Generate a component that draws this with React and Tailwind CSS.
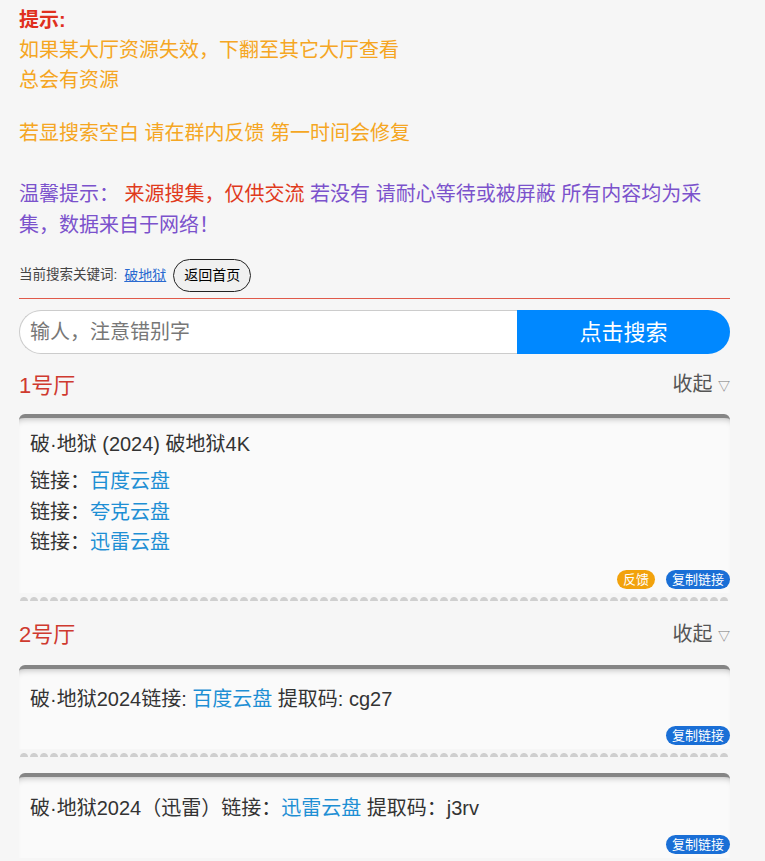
const font = { fontFamily: '"Liberation Sans", "Noto Sans CJK SC", sans-serif' };

function Badge({ color, children }) {
  return (
    <span className={`inline-flex h-[19px] items-center rounded-full px-[6px] text-[13px] leading-none text-white ${color}`}>
      {children}
    </span>
  );
}

function Card({ children, top, badges }) {
  return (
    <div>
      <div className={`rounded-t-[6px] border-t-4 border-[#858585] bg-[#fafafa] pl-[11px] shadow-[inset_0_6px_6px_-5px_rgba(0,0,0,0.25)] ${top}`}>
        {children}
        <div className="mt-[12px] flex justify-end gap-[11px] pb-[4px]">{badges}</div>
      </div>
      <div className="h-[8px] bg-[radial-gradient(circle_at_50%_100%,#cfcfcf_3.5px,transparent_4.5px)] bg-[length:10px_8px] bg-repeat-x" />
    </div>
  );
}

function Hall({ name, mt }) {
  return (
    <div className={`flex items-center justify-between ${mt}`}>
      <span className="text-[22px] leading-[30px] text-[#cf3a2f]">{name}</span>
      <span className="text-[20px] leading-[30px] text-[#555]">
        收起 <span className="text-[12px] text-[#777]">▽</span>
      </span>
    </div>
  );
}

export default function App() {
  return (
    <div className="min-h-[861px] bg-[#f6f6f6]" style={font}>
      <div className="ml-[19px] w-[711px] pt-[5px]">
        <p className="text-[20px] font-bold leading-[30px] text-[#e0301e]">提示:</p>
        <p className="text-[20px] leading-[30px] text-[#f5a623]">
          如果某大厅资源失效，下翻至其它大厅查看
          <br />
          总会有资源
        </p>
        <p className="mt-[23px] text-[20px] leading-[30px] text-[#f5a623]">若显搜索空白 请在群内反馈 第一时间会修复</p>
        <p className="mt-[31px] text-[20px] leading-[31px] text-[#7b52cc]">
          温馨提示： <span className="text-[#e03a1c]">来源搜集，仅供交流</span> 若没有 请耐心等待或被屏蔽 所有内容均为采集，数据来自于网络！
        </p>
        <div className="mt-[18px] flex items-center gap-[7px] text-[13.5px] text-[#444]">
          <span>当前搜索关键词:</span>
          <a className="text-[14px] text-[#2a6ad0] underline">破地狱</a>
          <span className="flex h-[33px] items-center rounded-full border border-[#222] bg-[#f0f0f0] px-[10px] text-[14px] text-black">
            返回首页
          </span>
        </div>
        <div className="mt-[6px] h-px bg-[#e05a4a]" />
        <div className="mt-[11px] flex h-[44px]">
          <div className="flex flex-1 items-center rounded-l-full border border-r-0 border-[#cccccc] bg-white pl-[10px] text-[20px] text-[#777]">
            输人，注意错别字
          </div>
          <div className="flex w-[213px] items-center justify-center rounded-r-full bg-[#0088ff] text-[22px] text-white">
            点击搜索
          </div>
        </div>

        <Hall name="1号厅" mt="mt-[15px]" />
        <div className="mt-[12px]">
          <Card
            top="pt-[11px]"
            badges={
              <>
                <Badge color="bg-[#f2a20c]">反馈</Badge>
                <Badge color="bg-[#1a6fd6]">复制链接</Badge>
              </>
            }
          >
            <p className="text-[20px] leading-[30px] text-[#333]">破·地狱 (2024) 破地狱4K</p>
            <div className="mt-[7px] text-[20px] leading-[30.5px] text-[#333]">
              <p>链接：<span className="text-[#1e8fd4]">百度云盘</span></p>
              <p>链接：<span className="text-[#1e8fd4]">夸克云盘</span></p>
              <p>链接：<span className="text-[#1e8fd4]">迅雷云盘</span></p>
            </div>
          </Card>
        </div>

        <Hall name="2号厅" mt="mt-[18px]" />
        <div className="mt-[13px]">
          <Card top="pt-[15px]" badges={<Badge color="bg-[#1a6fd6]">复制链接</Badge>}>
            <p className="text-[20px] leading-[30px] text-[#333]">
              破·地狱2024链接: <span className="text-[#1e8fd4]">百度云盘</span> 提取码: cg27
            </p>
          </Card>
        </div>
        <div className="mt-[16px]">
          <Card top="pt-[16px]" badges={<Badge color="bg-[#1a6fd6]">复制链接</Badge>}>
            <p className="text-[20px] leading-[30px] text-[#333]">
              破·地狱2024（迅雷）链接：<span className="text-[#1e8fd4]">迅雷云盘</span> 提取码：j3rv
            </p>
          </Card>
        </div>
      </div>
    </div>
  );
}
